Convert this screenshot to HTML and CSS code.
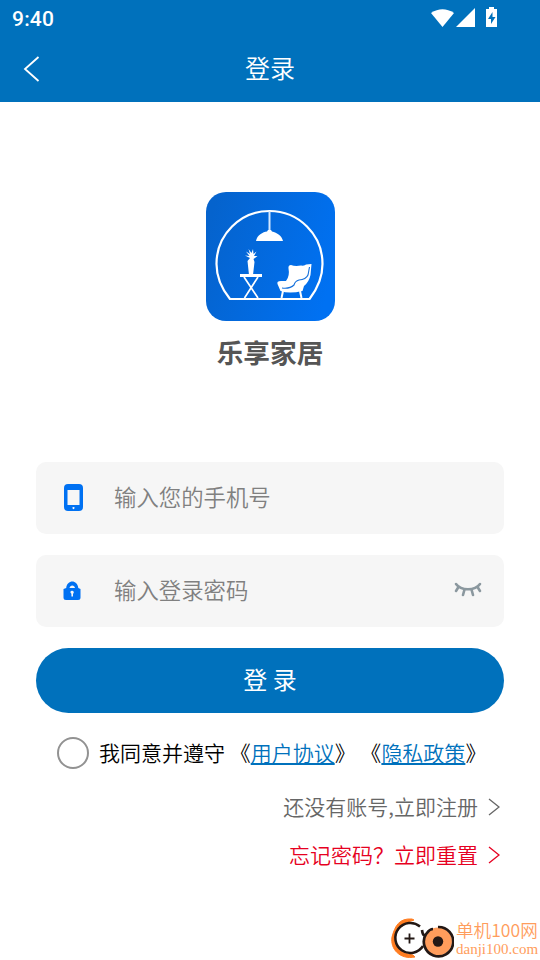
FILE: index.html
```html
<!DOCTYPE html>
<html lang="zh-CN">
<head>
<meta charset="utf-8">
<title>登录</title>
<link rel="stylesheet" href="styles.css">
</head>
<body>
<header class="header">
  <div class="status">
    <span class="clock">9:40</span>
    <svg class="signals" width="68" height="22" viewBox="0 0 68 22" fill="#fff">
      <path d="M0 6Q11.500 -1.500 23 6L11.500 20Z"/>
      <path d="M44 1V20H25Z"/>
      <path fill-rule="evenodd" d="M58 0h5v2h3v18H55V2h3ZM61.500 5l-4.500 7h3v5l4.500-7h-3Z"/>
    </svg>
  </div>
  <div class="navbar">
    <svg class="back" width="18" height="28" viewBox="0 0 18 28"><path d="M15.500 2L2 14L15.500 26" fill="none" stroke="#fff" stroke-width="1.800"/></svg>
    <h1 class="title">登录</h1>
  </div>
</header>
<main class="main">
  <svg class="logo" width="129" height="129" viewBox="0 0 129 129">
    <defs><linearGradient id="bg" x1="0" y1="0.300" x2="1" y2="0.600"><stop offset="0" stop-color="#0563cd"/><stop offset="1" stop-color="#0071f2"/></linearGradient></defs>
    <rect width="129" height="129" rx="20" fill="url(#bg)"/>
    <path d="M24 107C15 96 10.500 85 10.500 72A53 53 0 0 1 116.500 72C116.500 85 112 96 103.500 107Z" fill="none" stroke="#fff" stroke-width="2.200"/>
    <path d="M63.500 19V39" stroke="#d5e8ff" stroke-width="2"/>
    <path d="M50 49C51 43 57 40 61 39.500L62 38h3l1 1.500C71 40.500 76 44 77 49Z" fill="#fff"/>
    <path d="M43 83L41.500 69L44 66L39 63.500L43.500 64L40 59.500L44 62L42.500 57L45.500 61L47 57L47.500 62L50.500 59.500L48 64L51.500 64L47.500 67L48.500 70L47 83Z" fill="#fff"/>
    <path d="M34 82h22v3H34Z" fill="#fff"/>
    <path d="M38 85L52 106M52 85L38.500 106" fill="none" stroke="#fff" stroke-width="1.700"/>
    <path d="M82.500 76.500Q82 73 85 73Q89 74.500 95 73.500Q99 74 100 72.500L105.500 72L104.500 83Q103 90 98 94L96.500 99Q83 102 74.500 99L71.500 92Q70.500 89 75 89L80 89Q84 84 82.500 76.500Z" fill="#fff"/>
    <path d="M103.500 75L102 83Q100 87.500 93 88Q89 89 88 93Q84 97 76 96" fill="none" stroke="#1470dc" stroke-width="1.100"/>
    <path d="M77 99L75.500 106M94 99L95.500 106" stroke="#fff" stroke-width="2"/>
  </svg>
  <h2 class="app-name">乐享家居</h2>
  <form class="form">
    <div class="field">
      <svg class="field-icon" width="20" height="28" viewBox="0 0 20 28"><path fill="#0071f2" fill-rule="evenodd" d="M4 0H15A4 4 0 0 1 19 4V23A4 4 0 0 1 15 27H4A4 4 0 0 1 0 23V4A4 4 0 0 1 4 0ZM3.500 6V21H15.500V6ZM9.500 23a1 1 0 1 0 .01 0Z"/></svg>
      <span class="placeholder">输入您的手机号</span>
    </div>
    <div class="field">
      <svg class="field-icon" width="20" height="20" viewBox="0 0 20 20"><path fill="#0071f2" fill-rule="evenodd" d="M2.200 7C3 -1.700 13.500 -1.700 14.300 7L16.500 8V16.500Q16.500 19 14 19H2Q-.5 19 -.5 16.500V8ZM5.500 7H11C10.500 3.500 6 3.500 5.500 7Z"/><path d="M6.400 11.500a1.700 1.700 0 1 1 2.600 1.300V15.500H7.400V12.800Z" fill="#f6f6f6"/></svg>
      <span class="placeholder">输入登录密码</span>
      <svg class="eye" width="28" height="16" viewBox="0 0 28 16" fill="none" stroke="#8b989f" stroke-width="2.600" stroke-linecap="round"><path d="M2 2C7 9 21 9 26 2M4.500 5L2 9M10.500 7.500L9 13M17.500 7.500L19 13M23.500 5L26 9"/></svg>
    </div>
    <div class="submit">登 录</div>
  </form>
  <div class="agreement"><span class="radio"></span><span class="terms">我同意并遵守 《<a class="doc">用户协议</a>》 《<a class="doc">隐私政策</a>》</span></div>
  <div class="link register"><span>还没有账号,立即注册</span><svg width="12" height="18" viewBox="0 0 12 18"><path d="M1 1L11 9L1 17"/></svg></div>
  <div class="link reset"><span>忘记密码？立即重置</span><svg width="12" height="18" viewBox="0 0 12 18"><path d="M1 1L11 9L1 17"/></svg></div>
</main>
<div class="watermark">
  <svg width="64" height="42" viewBox="0 0 64 42" fill="none">
    <path d="M24 2L22 1C9 0 5 8 2 19C0 31 10 42 25 39L23 37C11 36 5 28 6 19C8 10 14 5 24 2Z" fill="#ff7d21" stroke="#ff7d21" stroke-width="1"/>
    <circle cx="20" cy="20.500" r="14" fill="#fff"/>
    <path d="M30 8.500A15 15 0 1 0 33 28" stroke="#231815" stroke-width="2.500"/>
    <path d="M14.500 20.500h10M19.500 15.500v10" stroke="#231815" stroke-width="1.800"/>
    <circle cx="48" cy="23.500" r="14" fill="#ff9d5c"/>
    <path d="M48 9A14.700 14.700 0 1 1 36 16M32 12C33 19 35 18 37 15C39 12 41 11 43 11" stroke="#231815" stroke-width="2.700"/>
    <circle cx="48" cy="23.500" r="5.200" fill="#231815"/>
  </svg>
  <div class="mark-text"><span class="mark-name">单机100网</span><span class="mark-url">danji100.com</span></div>
</div>
</body>
</html>
```
FILE: styles.css
```css
* { box-sizing: border-box; }
body {
  margin: 0;
  height: 960px;
  overflow: hidden;
  position: relative;
  background: #fff;
  color: #111;
  font-family: "Noto Sans CJK SC", sans-serif;
  font-weight: 350;
  text-spacing-trim: space-all;
}
svg { display: block; flex: none; }
.header { height: 102px; background: #0071bc; color: #fff; }
.status {
  height: 36px;
  padding: 0 42px 0 12px;
  display: flex;
  align-items: center;
  justify-content: space-between;
}
.clock { font: 500 21px/36px Roboto, sans-serif; padding-top: 2px; letter-spacing: 0.2px; }
.signals { margin-top: -1px; margin-right: -1px; }
.navbar { height: 66px; display: grid; grid-template-columns: 100px 1fr 100px; align-items: center; }
.back { margin-left: 23px; }
.title { margin: 0; font-size: 25px; font-weight: 350; line-height: 62px; height: 66px; text-align: center; }
.main { padding: 90px 36px 0; }
.logo { margin: 0 auto; }
.app-name { margin: 11px 0 0; text-align: center; font-size: 26.7px; line-height: 40px; font-weight: 700; color: #555; }
.form { margin-top: 90px; }
.field {
  height: 72px;
  margin-bottom: 21px;
  padding: 0 22px 0 28px;
  display: flex;
  align-items: center;
  background: #f6f6f6;
  border-radius: 10px;
}
.field-icon { margin-right: 30px; margin-top: -1px; overflow: visible; }
.placeholder { flex: 1; font-size: 22.4px; line-height: 69px; height: 72px; color: #808080; }
.eye { margin-top: -2px; }
.submit {
  height: 65px;
  border-radius: 33px;
  background: #0071bc;
  color: #fff;
  font-size: 24px;
  font-weight: 400;
  line-height: 62px;
  text-align: center;
}
.agreement { margin-top: 24px; padding-left: 21px; display: flex; align-items: center; height: 32px; font-size: 21px; white-space: nowrap; color: #000; }
.terms { height: 32px; line-height: 30px; }
.radio { width: 32px; height: 32px; margin-right: 10px; border: 2px solid #929292; border-radius: 50%; flex: none; }
.doc { color: #0071bc; text-decoration: underline; }
.link { display: flex; align-items: center; justify-content: flex-end; gap: 10px; height: 48px; padding-right: 4px; font-size: 21px; }
.link span { line-height: 46px; height: 48px; }
.link path { fill: none; stroke: currentColor; stroke-width: 1.3; }
.register { margin-top: 14px; color: #666; }
.reset { color: #e60021; }
.watermark { position: absolute; left: 390px; top: 918px; display: flex; align-items: center; gap: 2px; }
.mark-text { display: flex; flex-direction: column; color: #ff9d5c; white-space: nowrap; padding-bottom: 2px; }
.mark-name { font-size: 17.6px; line-height: 22px; }
.mark-url { font: 15px/16px "Liberation Serif", serif; }
```
